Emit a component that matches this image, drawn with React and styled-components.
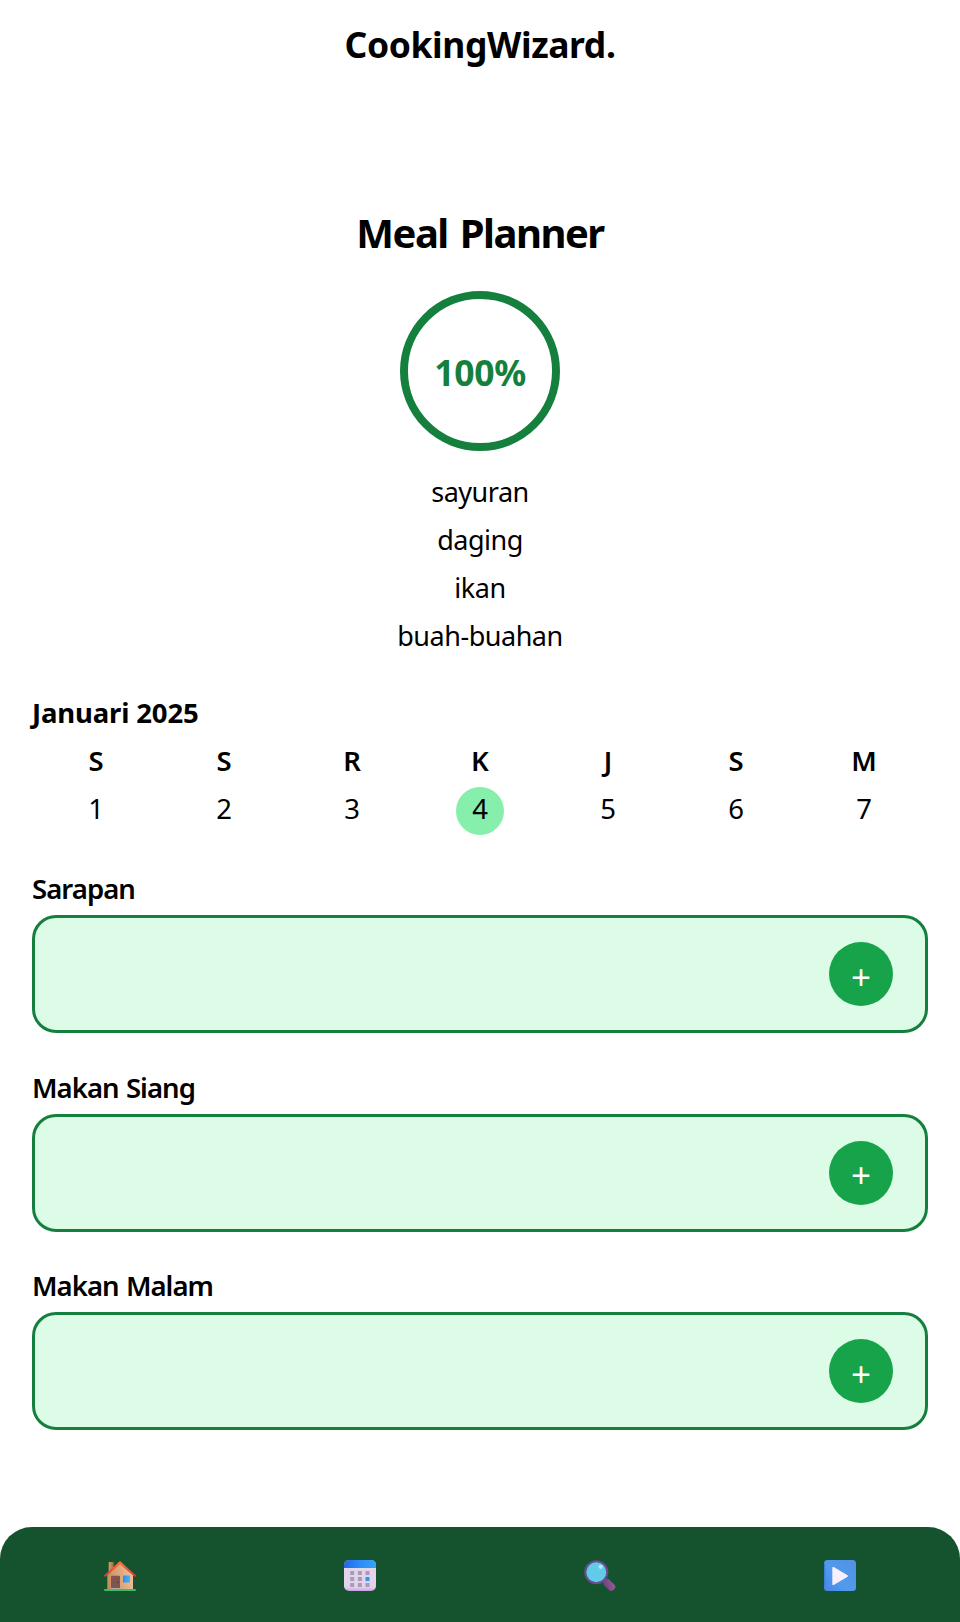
import React from "react";
import styled, { createGlobalStyle } from "styled-components";

const GlobalStyle = createGlobalStyle`
  *, *::before, *::after { box-sizing: border-box; }
  body {
    margin: 0;
    background: #fff;
    color: #000;
    font-family: "Segoe UI", "Noto Sans", sans-serif;
  }
`;

const Page = styled.div`
  display: flex;
  flex-direction: column;
  width: 100%;
  height: 1622px;
`;

const Brand = styled.h1`
  margin: 20px 0 0;
  text-align: center;
  font-size: 35.5px;
  font-weight: 700;
  line-height: 49px;
  letter-spacing: -0.4px;
`;

const Main = styled.main`
  display: flex;
  flex-direction: column;
  flex: 1;
  padding: 140px 32px 0;
`;

const Title = styled.h2`
  margin: 0;
  text-align: center;
  font-size: 40px;
  font-weight: 700;
  line-height: 48px;
  letter-spacing: -1.5px;
  word-spacing: 3px;
`;

const Progress = styled.div`
  align-self: center;
  width: 160px;
  height: 160px;
  margin-top: 34px;
  padding-top: 1px;
  display: flex;
  align-items: center;
  justify-content: center;
  border: 8px solid #15803d;
  border-radius: 50%;
  color: #15803d;
  font-size: 35.5px;
  font-weight: 700;
  line-height: 48px;
  letter-spacing: -0.3px;
`;

const Ingredients = styled.ul`
  list-style: none;
  margin: 17px 0 0;
  padding: 0;
  text-align: center;
  font-size: 27px;
  line-height: 48px;
  letter-spacing: -0.48px;
`;

const Month = styled.h3`
  margin: 29px 0 0;
  font-size: 27.5px;
  font-weight: 700;
  line-height: 48px;
  letter-spacing: -0.15px;
`;

const Week = styled.div`
  display: grid;
  grid-template-columns: repeat(7, 1fr);
  justify-items: center;
  font-size: 27.5px;
`;

const DayName = styled.div`
  line-height: 48px;
  font-weight: 600;
`;

const DayNumber = styled.div`
  width: 48px;
  height: 48px;
  margin-top: 2px;
  border-radius: 50%;
  background: ${(p) => (p.$active ? "#86efac" : "transparent")};
  line-height: 43px;
  text-align: center;
`;

const Meals = styled.div`
  display: flex;
  flex-direction: column;
  gap: 30.6px;
  margin-top: 30px;
`;

const MealName = styled.h4`
  margin: 0 0 2px;
  font-size: 27.5px;
  font-weight: 600;
  line-height: 48px;
  letter-spacing: -0.95px;
  word-spacing: 1px;
`;

const MealCard = styled.div`
  display: flex;
  align-items: center;
  justify-content: flex-end;
  height: 118px;
  padding: 0 32px;
  border: 3px solid #15803d;
  border-radius: 24px;
  background: #dcfce7;
`;

const AddButton = styled.button`
  width: 64px;
  height: 64px;
  padding: 5px 0 0;
  border: 0;
  border-radius: 50%;
  background: #16a34a;
  color: #fff;
  font: 400 35px/48px "Segoe UI", "Noto Sans", sans-serif;
`;

const Nav = styled.nav`
  display: grid;
  grid-template-columns: repeat(4, 1fr);
  place-items: center;
  height: 95.5px;
  padding-top: 3.5px;
  border-radius: 32px 32px 0 0;
  background: #14532d;

  svg { display: block; width: 32px; height: 32px; }
`;

const HomeIcon = () => (
  <svg viewBox="0 0 32 32">
    <defs>
      <linearGradient id="wall" x1="0" x2="1" y1="0.6" y2="0.4">
        <stop offset="0" stopColor="#c98d5b" />
        <stop offset="0.5" stopColor="#dda67a" />
        <stop offset="1" stopColor="#efc09a" />
      </linearGradient>
      <linearGradient id="chimney">
        <stop offset="0" stopColor="#d9a26c" />
        <stop offset="1" stopColor="#9c6d38" />
      </linearGradient>
      <linearGradient id="roof" x1="0" x2="0" y1="0" y2="1">
        <stop offset="0" stopColor="#fb7a3a" />
        <stop offset="1" stopColor="#dd3838" />
      </linearGradient>
      <linearGradient id="pane">
        <stop offset="0" stopColor="#2b8df0" />
        <stop offset="1" stopColor="#3eb8fb" />
      </linearGradient>
    </defs>
    <path d="M4.7 2h5v10h-5z" fill="url(#chimney)" />
    <path d="M3.3 15 16 3.5 29 15v14.5H3.3z" fill="url(#wall)" />
    <rect x="7" y="15.8" width="9" height="12.5" rx="0.7" fill="#805550" />
    <circle cx="13.8" cy="22.5" r="0.7" fill="#553630" />
    <rect x="6.7" y="28" width="10" height="1.4" fill="#b8a8b4" />
    <rect x="19" y="15.5" width="7" height="7" rx="0.5" fill="url(#pane)" />
    <path d="M16 .9 32 15.5c.2 1-.6 1.5-1.6 1L16 4.3 1.6 16.5c-1 .5-1.8 0-1.6-1z" fill="url(#roof)" />
    <rect y="29" width="32" height="2" rx="1" fill="#3dbb68" />
  </svg>
);

const CalendarIcon = () => (
  <svg viewBox="0 0 32 32">
    <defs>
      <linearGradient id="calTop">
        <stop offset="0" stopColor="#2464e8" />
        <stop offset="0.5" stopColor="#2c8df8" />
        <stop offset="1" stopColor="#35a2fb" />
      </linearGradient>
      <linearGradient id="calBody" x1="0" x2="0" y1="0" y2="1">
        <stop offset="0" stopColor="#e3d8ee" />
        <stop offset="0.88" stopColor="#e0d2ea" />
        <stop offset="1" stopColor="#c9a0e6" />
      </linearGradient>
    </defs>
    <rect width="32" height="31" rx="5" fill="url(#calBody)" />
    <path d="M0 8V5a5 5 0 0 1 5-5h22a5 5 0 0 1 5 5v3z" fill="url(#calTop)" />
    {[11, 17, 23].map((y) =>
      [6.2, 13.9, 21.5].map((x) => (
        <rect
          key={`${x}-${y}`}
          x={x}
          y={y}
          width="4"
          height="4"
          rx="0.5"
          fill={x === 21.5 && y === 17 ? "#2f96f5" : "#a99bb4"}
        />
      ))
    )}
  </svg>
);

const SearchIcon = () => (
  <svg viewBox="0 0 32 32">
    <defs>
      <linearGradient id="handle" x1="0" x2="1" y1="1" y2="0">
        <stop offset="0" stopColor="#67427e" />
        <stop offset="1" stopColor="#9b5a9f" />
      </linearGradient>
    </defs>
    <path d="m19 18.5 3 3" stroke="#715080" strokeWidth="2.5" />
    <rect x="-6.4" y="-3.8" width="12.8" height="7.6" rx="3" transform="translate(25.3 25) rotate(45)" fill="url(#handle)" />
    <circle cx="12.3" cy="12.3" r="11" fill="#62cbe9" stroke="#674e91" strokeWidth="2.1" />
    <circle cx="16.7" cy="6.8" r="2.1" fill="#b7e8f8" />
  </svg>
);

const PlayIcon = () => (
  <svg viewBox="0 0 32 32">
    <defs>
      <linearGradient id="play" x1="1" x2="0" y1="0.2" y2="1">
        <stop offset="0" stopColor="#5292e4" />
        <stop offset="0.55" stopColor="#519bed" />
        <stop offset="1" stopColor="#4784eb" />
      </linearGradient>
    </defs>
    <rect width="32" height="31" rx="3.5" fill="url(#play)" />
    <path d="M.6 3.5v24" stroke="#3f7ed8" strokeWidth="1.2" />
    <path d="M8.3 7.8c0-.8.7-1.1 1.4-.7l13.8 8.1c.6.4.6 1.1 0 1.5L9.7 24.9c-.7.4-1.4.1-1.4-.7z" fill="#f8f0ff" />
  </svg>
);

const ingredients = ["sayuran", "daging", "ikan", "buah-buahan"];
const dayNames = ["S", "S", "R", "K", "J", "S", "M"];
const dayNumbers = [1, 2, 3, 4, 5, 6, 7];
const meals = ["Sarapan", "Makan Siang", "Makan Malam"];

export default function App() {
  return (
    <Page>
      <GlobalStyle />
      <Brand>CookingWizard.</Brand>
      <Main>
        <Title>Meal Planner</Title>
        <Progress>100%</Progress>
        <Ingredients>
          {ingredients.map((item) => (
            <li key={item}>{item}</li>
          ))}
        </Ingredients>
        <Month>Januari 2025</Month>
        <Week>
          {dayNames.map((name, i) => (
            <DayName key={i}>{name}</DayName>
          ))}
          {dayNumbers.map((n) => (
            <DayNumber key={n} $active={n === 4}>{n}</DayNumber>
          ))}
        </Week>
        <Meals>
          {meals.map((meal) => (
            <section key={meal}>
              <MealName>{meal}</MealName>
              <MealCard>
                <AddButton>+</AddButton>
              </MealCard>
            </section>
          ))}
        </Meals>
      </Main>
      <Nav>
        <HomeIcon />
        <CalendarIcon />
        <SearchIcon />
        <PlayIcon />
      </Nav>
    </Page>
  );
}
